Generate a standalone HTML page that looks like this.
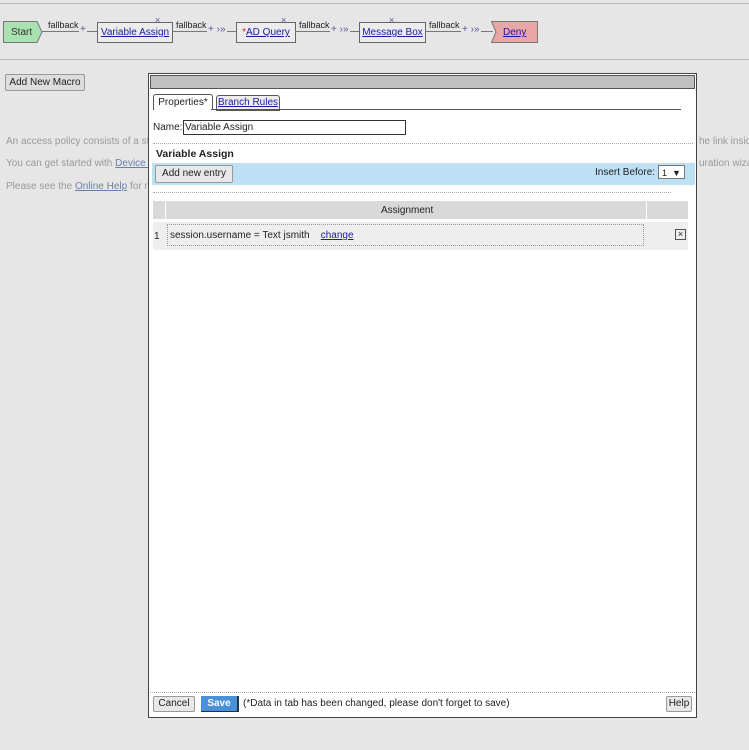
<!DOCTYPE html>
<html><head><style>
body{margin:0;width:749px;height:750px;background:#e6e6e6;font-family:"Liberation Sans",sans-serif;font-size:10px;color:#222;position:relative;overflow:hidden}
.a{position:absolute;white-space:nowrap}
a{color:#1a1aa6;text-decoration:underline}
.box{position:absolute;border:1px solid #666;background:#ececec;height:19px;top:22px;line-height:19px;text-align:center;white-space:nowrap}
.fb{position:absolute;top:20px;font-size:9px}
.ln{position:absolute;top:31px;height:1px;background:#777}
.btn{position:absolute;border:1px solid #999;background:#e8e8e8;border-radius:2px;text-align:center;line-height:15px;height:15px;white-space:nowrap}
.dot{position:absolute;border-top:1px dotted #aaa;height:0}
.pl{position:absolute;top:24px;color:#559;font-size:10px;white-space:nowrap;background:#e6e6e6;padding:0 1px}
</style></head><body>
<div class="a" style="left:0;top:3px;width:749px;height:1px;background:#bbb"></div>
<div class="a" style="left:0;top:59px;width:749px;height:1px;background:#bbb"></div>
<svg class="a" style="left:3px;top:21px" width="40" height="22"><path d="M0.5 0.5H34L39 11L34 21.5H0.5Z" fill="#a9e2b0" stroke="#777"/><text x="8" y="14" font-family="Liberation Sans" font-size="10" fill="#333">Start</text></svg>
<div class="ln" style="left:42px;width:55px"></div>
<div class="fb" style="left:48px">fallback</div><div class="pl" style="left:79px">+</div>
<div class="box" style="left:97px;width:74px"><a>Variable Assign</a></div><div class="a" style="left:155px;top:15px;color:#559;font-size:9px">×</div>
<div class="ln" style="left:172px;width:64px"></div>
<div class="fb" style="left:176px">fallback</div><div class="pl" style="left:207px">+ ›»</div>
<div class="box" style="left:236px;width:58px"><span style="color:#d22">*</span><a>AD Query</a></div><div class="a" style="left:281px;top:15px;color:#559;font-size:9px">×</div>
<div class="ln" style="left:295px;width:64px"></div>
<div class="fb" style="left:299px">fallback</div><div class="pl" style="left:330px">+ ›»</div>
<div class="box" style="left:359px;width:65px"><a>Message Box</a></div><div class="a" style="left:389px;top:15px;color:#559;font-size:9px">×</div>
<div class="ln" style="left:425px;width:68px"></div>
<div class="fb" style="left:429px">fallback</div><div class="pl" style="left:461px">+ ›»</div>
<svg class="a" style="left:491px;top:21px" width="47" height="22"><path d="M0.5 0.5H46.5V21.5H0.5L5 11Z" fill="#e8a6a4" stroke="#777"/><text x="12" y="14" font-family="Liberation Sans" font-size="10" fill="#1a1aa6" text-decoration="underline">Deny</text></svg>
<div class="btn" style="left:5px;top:74px;width:78px;background:#ddd">Add New Macro</div>
<div class="a" style="left:6px;top:136px;color:#999">An access policy consists of a sta</div>
<div class="a" style="left:6px;top:158px;color:#999">You can get started with <a style="color:#6a7fb0">Device W</a></div>
<div class="a" style="left:6px;top:181px;color:#999">Please see the <a style="color:#6a7fb0">Online Help</a> for mo</div>
<div class="a" style="left:699px;top:136px;color:#999">he link inside</div>
<div class="a" style="left:699px;top:158px;color:#999">uration wizar</div>

<div class="a" style="left:148px;top:73px;width:547px;height:643px;border:1px solid #444;background:#fff">
<div class="a" style="left:1px;top:1px;width:545px;height:14px;background:#c0c0c0;border:1px solid #555;box-sizing:border-box"></div>
<div class="a" style="left:4px;top:20px;width:58px;height:15px;border:1px solid #555;border-bottom:none;border-radius:3px 3px 0 0;line-height:15px;text-align:center;background:#fff">Properties*</div>
<div class="a" style="left:67px;top:21px;width:62px;height:14px;border:1px solid #555;border-radius:3px 3px 0 0;line-height:14px;text-align:center;background:#eee"><a>Branch Rules</a></div>
<div class="a" style="left:62px;top:35px;width:470px;height:1px;background:#555"></div>
<div class="a" style="left:4px;top:48px">Name:</div>
<div class="a" style="left:34px;top:46px;width:220px;height:13px;border:1px solid #333;line-height:13px;padding-left:1px">Variable Assign</div>
<div class="dot" style="left:4px;top:69px;width:540px"></div>
<div class="a" style="left:7px;top:74px;font-weight:bold;font-size:10.5px">Variable Assign</div>
<div class="a" style="left:3px;top:89px;width:543px;height:22px;background:#bee0f5"></div>
<div class="btn" style="left:6px;top:91px;width:76px;height:16px;line-height:16px">Add new entry</div>
<div class="a" style="left:446px;top:93px">Insert Before:</div>
<div class="a" style="left:509px;top:91px;width:27px;height:14px;border:1px solid #777;background:#fff;line-height:14px;padding-left:3px;box-sizing:border-box;font-size:9px">1 &nbsp;▼</div>
<div class="dot" style="left:4px;top:118px;width:518px"></div>
<div class="a" style="left:4px;top:127px;width:535px;height:18px;background:#d9d9d9"></div>
<div class="a" style="left:16px;top:127px;width:1px;height:49px;background:#fff"></div>
<div class="a" style="left:497px;top:127px;width:1px;height:49px;background:#fff"></div>
<div class="a" style="left:232px;top:131px">Assignment</div>
<div class="a" style="left:4px;top:148px;width:535px;height:28px;background:#eee"></div>
<div class="a" style="left:18px;top:150px;width:477px;height:22px;border:1px dotted #999;box-sizing:border-box"></div>
<div class="a" style="left:5px;top:157px">1</div>
<div class="a" style="left:21px;top:156px">session.username = Text jsmith &nbsp;&nbsp;&nbsp;<a>change</a></div>
<div class="a" style="left:526px;top:155px;width:9px;height:9px;border:1px solid #555;font-size:9px;line-height:9px;text-align:center;background:#eee">×</div>
<div class="dot" style="left:1px;top:618px;width:545px"></div>
<div class="btn" style="left:4px;top:622px;width:40px;height:14px;line-height:14px">Cancel</div>
<div class="a" style="left:52px;top:622px;width:36px;height:15px;background:#4a90d9;border-right:2px solid #234;border-bottom:1px solid #234;color:#fff;font-weight:bold;text-align:center;line-height:15px">Save</div>
<div class="a" style="left:94px;top:624px">(*Data in tab has been changed, please don't forget to save)</div>
<div class="btn" style="left:517px;top:622px;width:24px;height:14px;line-height:14px">Help</div>
</div>
</body></html>
